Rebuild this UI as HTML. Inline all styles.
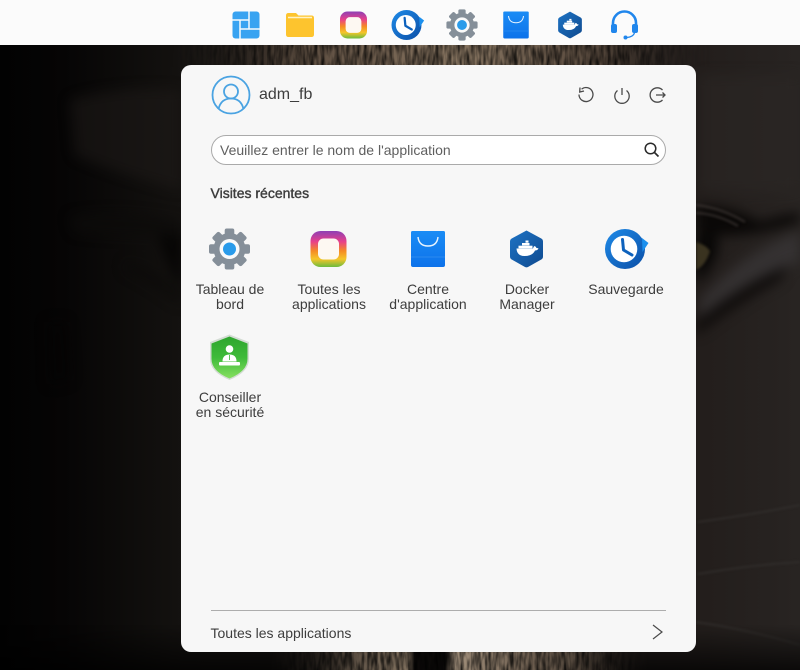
<!DOCTYPE html>
<html lang="fr">
<head>
<meta charset="utf-8">
<title>Menu</title>
<style>
html,body{margin:0;padding:0;width:800px;height:670px;overflow:hidden;background:#000}
body{position:relative;font-family:"Liberation Sans",Arial,sans-serif;color:#3d3d3d}
#bg{position:absolute;left:0;top:0}
#bar{position:absolute;left:0;top:0;width:800px;height:45px;background:#fbfbfb}
#panel{position:absolute;left:181px;top:65px;width:515px;height:587px;background:#f7f7f7;border-radius:10px}
.t{position:absolute;font-size:14px;line-height:15px;white-space:nowrap}
.c{text-align:center;width:110px}
#search{position:absolute;left:211px;top:135px;width:453px;height:28px;background:#fff;border:1px solid #aaa;border-radius:15px}
#rule{position:absolute;left:211px;top:610px;width:455px;height:1px;background:#adadad}
svg.i{position:absolute;left:0;top:0;filter:blur(.3px)}
</style>
</head>
<body>
<svg id="bg" width="800" height="670" viewBox="0 0 800 670">
<defs>
<linearGradient id="b1" x1="0" x2="1" y1="0" y2="0">
<stop offset="0" stop-color="#020202"/><stop offset=".08" stop-color="#060505"/><stop offset=".23" stop-color="#141210"/><stop offset=".88" stop-color="#231e1c"/><stop offset="1" stop-color="#282422"/>
</linearGradient>
<linearGradient id="bt" x1="0" x2="0" y1="0" y2="1">
<stop offset="0" stop-color="#000" stop-opacity="0"/><stop offset="1" stop-color="#000" stop-opacity=".7"/>
</linearGradient>
<linearGradient id="f1" x1="0" x2="1" y1="0" y2="0">
<stop offset="0" stop-color="#2a221d"/><stop offset=".35" stop-color="#6d5c4c"/><stop offset=".55" stop-color="#85735f"/><stop offset=".75" stop-color="#5d4e41"/><stop offset="1" stop-color="#241d19"/>
</linearGradient>
<linearGradient id="f2" x1="0" x2="1" y1="0" y2="0">
<stop offset="0" stop-color="#2a231e"/><stop offset=".36" stop-color="#80705e"/><stop offset=".38" stop-color="#0b0908"/><stop offset=".46" stop-color="#0b0908"/><stop offset=".49" stop-color="#a08e7a"/><stop offset=".68" stop-color="#6e5f50"/><stop offset="1" stop-color="#221c18"/>
</linearGradient>
<linearGradient id="fm1" x1="0" x2="1" y1="0" y2="0">
<stop offset="0" stop-color="#000"/><stop offset=".11" stop-color="#555"/><stop offset=".24" stop-color="#fff"/><stop offset=".8" stop-color="#fff"/><stop offset=".94" stop-color="#333"/><stop offset="1" stop-color="#000"/>
</linearGradient>
<mask id="m1" maskUnits="userSpaceOnUse" x="170" y="45" width="540" height="22"><rect x="170" y="45" width="540" height="22" fill="url(#fm1)"/></mask>
<mask id="m2" maskUnits="userSpaceOnUse" x="270" y="650" width="380" height="20"><rect x="270" y="650" width="380" height="20" fill="url(#fm1)"/></mask>
<filter id="fur" x="0" y="0" width="100%" height="100%">
<feTurbulence type="fractalNoise" baseFrequency=".28 .06" numOctaves="2" seed="4"/>
<feColorMatrix values="0 0 0 0 0  0 0 0 0 0  0 0 0 0 0  1.600 0 0 0 -.5"/>
</filter>
<filter id="soft" filterUnits="userSpaceOnUse" x="0" y="0" width="800" height="670" color-interpolation-filters="sRGB"><feGaussianBlur stdDeviation="6"/></filter>
<filter id="soft2" filterUnits="userSpaceOnUse" x="0" y="0" width="800" height="670" color-interpolation-filters="sRGB"><feGaussianBlur stdDeviation="1.200"/></filter>
</defs>
<rect width="800" height="670" fill="url(#b1)"/>
<g filter="url(#soft)">
<path d="M70 100Q120 85 181 90V190Q120 175 75 155Z" fill="#201c1a" opacity=".5"/>
<path d="M70 217Q120 208 181 222V236Q120 236 75 232Z" fill="#0d0b0a" opacity=".8"/>
<path d="M157 235H182V290Q165 262 157 235Z" fill="#070605"/>
<path d="M125 262Q150 265 181 295V305Q150 282 125 270Z" fill="#0c0a09" opacity=".7"/>
<path d="M48 322H66L70 380 50 385Z" fill="#040303" opacity=".7"/>
<path d="M700 75H800V190Q750 195 700 190Z" fill="#2c2826" opacity=".5"/>
<path d="M696 206Q735 206 760 222 780 215 800 213V222Q750 238 712 235L696 228Z" fill="#0a0807"/>
<path d="M696 232H712Q722 240 716 256 706 278 696 282Z" fill="#080706"/>
<path d="M696 322Q735 290 790 262L780 280Q735 305 696 335Z" fill="#0e0b0a"/>
<path d="M700 300Q745 250 800 232V262Q745 280 700 318Z" fill="#3b3739" opacity=".7"/>
</g>
<path d="M696 242Q706 245 710 251 706 265 696 270Z" fill="#3a3320" filter="url(#soft2)"/>
<path d="M696 205Q722 208 745 222M696 213Q718 214 738 226" stroke="#4a4340" stroke-width="2" fill="none" opacity=".6" filter="url(#soft2)"/>
<path d="M698 522Q750 515 800 505M698 574Q750 565 800 562M696 622Q750 630 800 645" stroke="#353230" stroke-width="1.200" fill="none" filter="url(#soft2)"/>
<rect y="625" width="800" height="45" fill="url(#bt)"/>
<g mask="url(#m1)">
<rect x="170" y="45" width="540" height="22" fill="url(#f1)"/>
<rect x="170" y="45" width="540" height="22" filter="url(#fur)"/>
</g>
<g mask="url(#m2)">
<rect x="270" y="650" width="380" height="20" fill="url(#f2)"/>
<rect x="270" y="650" width="380" height="20" filter="url(#fur)"/>
</g>
</svg>
<div id="bar"></div>
<div id="panel"></div>
<div id="search"></div>
<div id="rule"></div>

<svg class="i" width="800" height="670" viewBox="0 0 800 670">
<defs>
<linearGradient id="rb" x1="0" x2="0" y1="0" y2="1">
<stop offset="0" stop-color="#8e3fb5"/><stop offset=".3" stop-color="#e8418a"/><stop offset=".55" stop-color="#f58a25"/><stop offset=".78" stop-color="#f5c52a"/><stop offset="1" stop-color="#6cbb3e"/>
</linearGradient>
<linearGradient id="bag" x1="0" x2="0" y1="0" y2="1">
<stop offset="0" stop-color="#1a8cf5"/><stop offset="1" stop-color="#0d72ea"/>
</linearGradient>
<linearGradient id="dock" x1="0" x2="1" y1="0" y2="1">
<stop offset="0" stop-color="#1e73c4"/><stop offset="1" stop-color="#0f4a8f"/>
</linearGradient>
<linearGradient id="clk" x1="0" x2="1" y1="0" y2="1">
<stop offset="0" stop-color="#1f8be8"/><stop offset="1" stop-color="#0b4ea6"/>
</linearGradient>
<linearGradient id="shield" x1="0" x2="0" y1="0" y2="1">
<stop offset="0" stop-color="#2ea52e"/><stop offset=".5" stop-color="#3fbb3a"/><stop offset="1" stop-color="#86e060"/>
</linearGradient>

<g id="gear">
<g fill="#858f99">
<circle r="16"/>
<rect x="-4.800" y="-20.500" width="9.600" height="41" rx="2"/>
<rect x="-4.800" y="-20.500" width="9.600" height="41" rx="2" transform="rotate(45)"/>
<rect x="-4.800" y="-20.500" width="9.600" height="41" rx="2" transform="rotate(90)"/>
<rect x="-4.800" y="-20.500" width="9.600" height="41" rx="2" transform="rotate(135)"/>
</g>
<circle r="10" fill="#fafafa"/>
<circle r="6.500" fill="#2a9bea"/>
</g>

<g id="rainbow">
<rect x="-18" y="-18" width="36" height="36" rx="10" fill="url(#rb)"/>
<rect x="-10.500" y="-10.500" width="21" height="21" rx="5.500" fill="#fdf8f2"/>
</g>

<g id="bagi">
<path d="M-17-16.500Q-17-18-15.500-18H15.500Q17-18 17-16.500V16Q17 18 15 18H-15Q-17 18-17 16Z" fill="url(#bag)"/>
<path d="M-17 8H17" stroke="#2b8af0" stroke-width="1"/>
<path d="M-10-12Q-9-3 0-3T10-12" fill="none" stroke="#e8f4ff" stroke-width="1.400"/>
</g>

<g id="dk">
<path d="M0-18.500 14.800-10.500Q16.500-9.500 16.500-7.500V7.500Q16.500 9.500 14.800 10.500L1.500 18Q0 18.800-1.500 18L-14.800 10.500Q-16.500 9.500-16.500 7.500V-7.500Q-16.500-9.500-14.800-10.500Z" fill="url(#dock)"/>
<path d="M-10-.5H6.500Q7-2.500 8-3 9.500-2.500 10-1 11.500-1 12-.5 11 1.500 8.500 1.500 6 7-2 7-9.500 7-10-.5Z" fill="#fff"/>
<g fill="#fff"><rect x="-8" y="-3.300" width="14" height="2.600"/><rect x="-4.500" y="-6" width="7.500" height="2.400"/><rect x="-1" y="-8.500" width="3" height="2.200"/></g>
</g>

<g id="clock">
<circle cx="-2" cy="0" r="20" fill="url(#clk)"/>
<path d="M15-11 21.500-6 15.500 3Z" fill="#1c90ee"/>
<circle cx="-3" cy="0" r="13.300" fill="#fff"/>
<path d="M-4.500-9.500-3.500 1 5 6" fill="none" stroke="#0e62bd" stroke-width="3" stroke-linejoin="round" stroke-linecap="round"/>
</g>
</defs>

<!-- dock -->
<g>
<rect x="232.500" y="11.500" width="27" height="27" rx="3" fill="#38a3f1"/>
<path d="M232.500 20H249V11.500M249 20V29M240 38.500V20M240 29H259.500" fill="none" stroke="#f4fafe" stroke-width="1.500"/>
<path d="M286 15.500Q286 13 288.500 13H296L298.500 15.500H311.500Q314 15.500 314 18V34.500Q314 37 311.500 37H288.500Q286 37 286 34.500Z" fill="#fdc42e"/>
<path d="M288 17.500H312" stroke="#fff2c4" stroke-width="1.500"/>
<use href="#rainbow" transform="translate(353.500 25) scale(.75)"/>
<use href="#clock" transform="translate(408 25) scale(.75)"/>
<use href="#gear" transform="translate(462 25) scale(.76)"/>
<use href="#bagi" transform="translate(516 25) scale(.75)"/>
<use href="#dk" transform="translate(570 25) scale(.72)"/>
<g fill="none" stroke="#2086ec">
<path d="M613 26V23A11.500 11.500 0 0 1 636 23V26" stroke-width="2.600"/>
<path d="M634.500 33Q633 37 627 37.500" stroke-width="1.300"/>
</g>
<rect x="611" y="24" width="6" height="9" rx="2" fill="#2086ec"/>
<rect x="632" y="24" width="6" height="9" rx="2" fill="#2086ec"/>
<circle cx="625.500" cy="37.500" r="2" fill="#2086ec"/>
</g>

<!-- avatar -->
<g fill="none" stroke="#4aa3e2" stroke-width="1.800">
<circle cx="231" cy="95" r="18.500"/>
<circle cx="231" cy="91.500" r="7"/>
<path d="M218.500 109Q221 98.500 231 98.500T243.500 109"/>
</g>

<!-- header actions -->
<g fill="none" stroke="#4a4a4a" stroke-width="1.300">
<path d="M582 88.800A7 7 0 1 1 579 95" stroke-linecap="round"/>
<path d="M580 87.500 579.700 92 584 91"/>
<path d="M617.500 90.500A7.200 7.200 0 1 0 626.500 90.500"/>
<path d="M622 88V95"/>
<path d="M662.500 90A7.200 7.200 0 1 0 662.500 100"/>
<path d="M656 95H665M662.500 92.500 665 95 662.500 97.500"/>
</g>

<!-- search icon -->
<g fill="none" stroke="#2a2a2a" stroke-width="1.500">
<circle cx="650.500" cy="148.500" r="5.300"/>
<path d="M654.500 152.500 658.500 156.500" stroke-width="1.700"/>
</g>

<!-- apps -->
<use href="#gear" transform="translate(229.500 249)"/>
<use href="#rainbow" transform="translate(328.500 249)"/>
<use href="#bagi" transform="translate(428 249)"/>
<use href="#dk" transform="translate(526.500 249)"/>
<use href="#clock" transform="translate(627 249)"/>

<!-- shield -->
<path d="M229.500 334.500 249 342V359Q249 372 229.500 380 210 372 210 359V342Z" fill="#d4dcd4"/>
<path d="M229.500 336.500 247.500 343.500V359Q247.500 371 229.500 378.500 211.500 371 211.500 359V343.500Z" fill="url(#shield)"/>
<circle cx="229.500" cy="349" r="3.800" fill="#fff"/>
<path d="M222.500 361.500Q222.500 354.500 229.500 354.500T236.500 361.500Z" fill="#fff"/>
<path d="M229.500 355V360" stroke="#5cc45a" stroke-width="1"/>
<rect x="219" y="362" width="21" height="3.500" rx="1" fill="#fff"/>

<!-- chevron -->
<path d="M653 625 662 632 653 639" fill="none" stroke="#4a4a4a" stroke-width="1.200"/>
</svg>

<div class="t" style="left:259px;top:86px;font-size:16px;line-height:18px">adm_fb</div>
<div class="t" style="left:220px;top:143px;color:#5f5f5f">Veuillez entrer le nom de l'application</div>
<div class="t" style="left:210.500px;top:186px;-webkit-text-stroke:.4px #3d3d3d">Visites récentes</div>

<div class="t c" style="left:175px;top:282px">Tableau de<br>bord</div>
<div class="t c" style="left:274px;top:282px">Toutes les<br>applications</div>
<div class="t c" style="left:373px;top:282px">Centre<br>d'application</div>
<div class="t c" style="left:472px;top:282px">Docker<br>Manager</div>
<div class="t c" style="left:571px;top:282px">Sauvegarde</div>
<div class="t c" style="left:175px;top:390px">Conseiller<br>en sécurité</div>

<div class="t" style="left:210.500px;top:626px">Toutes les applications</div>
</body>
</html>
